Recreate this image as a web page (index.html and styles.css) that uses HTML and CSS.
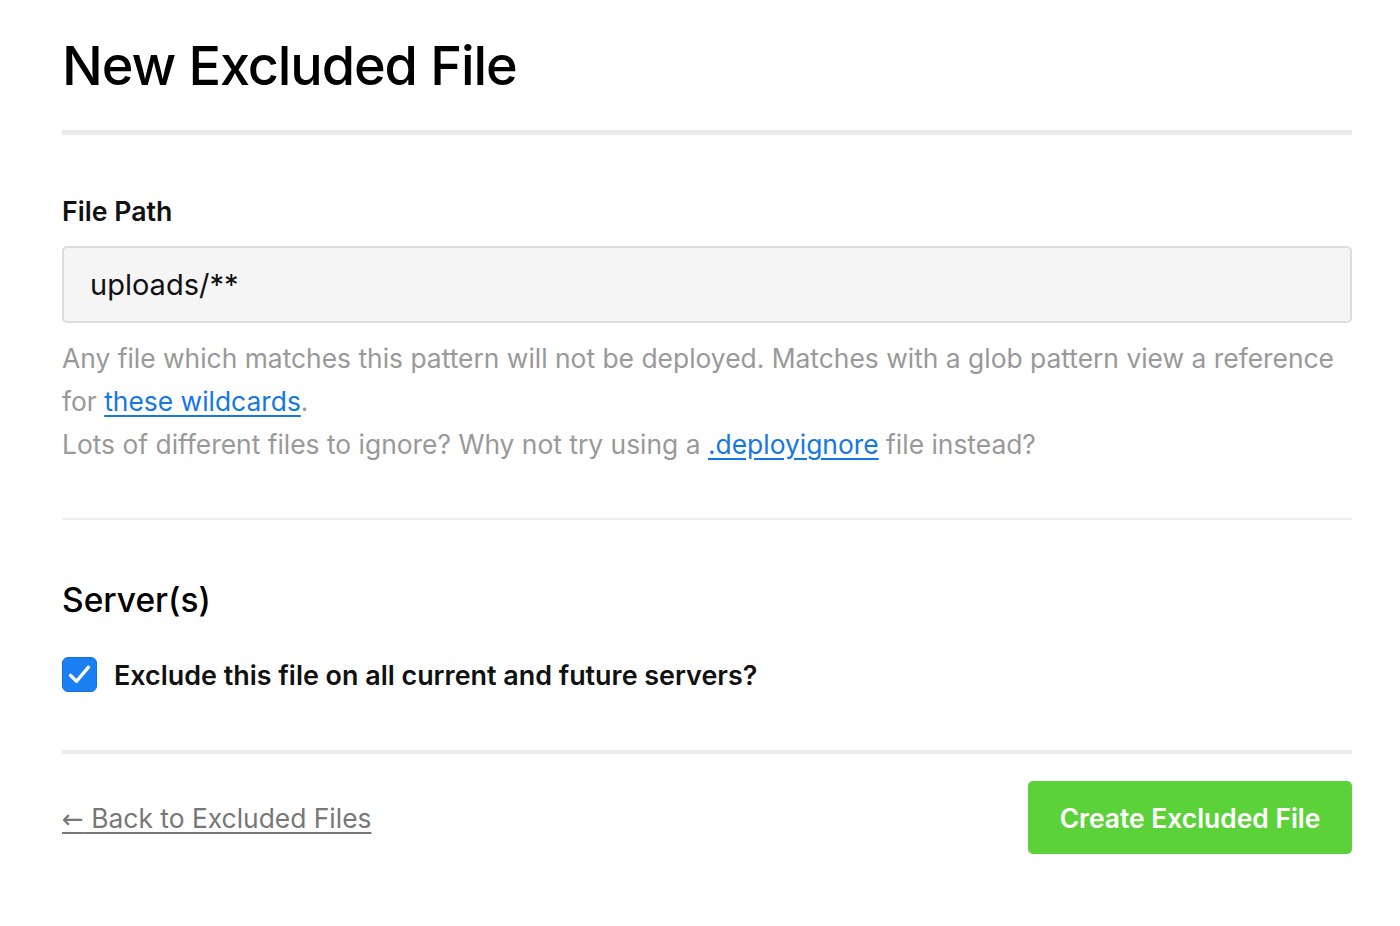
FILE: index.html
```html
<!DOCTYPE html>
<html lang="en">
<head>
<meta charset="utf-8">
<title>New Excluded File</title>
<link rel="stylesheet" href="styles.css">
</head>
<body>
<main class="page">
  <h1 class="title">New Excluded File</h1>
  <hr class="rule rule-thick">
  <section class="field">
    <label class="label" for="path">File Path</label>
    <input class="input" id="path" type="text" value="uploads/**">
    <p class="help">Any file which matches this pattern will not be deployed. Matches with a glob pattern view a reference for <a href="#">these wildcards</a>.</p>
    <p class="help">Lots of different files to ignore? Why not try using a <a href="#">.deployignore</a> file instead?</p>
  </section>
  <hr class="rule rule-thin">
  <section class="servers">
    <h2 class="subtitle">Server(s)</h2>
    <label class="check">
      <span class="box"><svg class="tick" viewBox="0 0 24 24" width="27" height="27"><path d="M4 12.8 L9.4 18 L20 5.5" fill="none" stroke="#fff" stroke-width="3" stroke-linecap="round" stroke-linejoin="round"/></svg></span>
      <span class="check-text">Exclude this file on all current and future servers?</span>
    </label>
  </section>
  <hr class="rule rule-mid">
  <footer class="actions">
    <a class="back" href="#"><span class="arrow">&larr;</span> Back to Excluded Files</a>
    <button class="btn" type="button">Create Excluded File</button>
  </footer>
</main>
</body>
</html>
```
FILE: styles.css
```css
html, body {
  margin: 0;
  padding: 0;
  background: #fff;
}
body {
  font-family: Inter, "Liberation Sans", Arial, sans-serif;
  color: #111;
}
.page {
  padding: 32px 48px 40px 62px;
}
.title {
  margin: 0;
  font-size: 54px;
  font-weight: 500;
  line-height: 68px;
  letter-spacing: -1.1px;
  color: #000;
}
.rule {
  border: 0;
  margin: 0;
  background: #ebebeb;
}
.rule-thick {
  height: 5px;
  margin-top: 30px;
}
.rule-thin {
  height: 2px;
  margin-top: 52px;
  background: #eeeeee;
}
.rule-mid {
  height: 4px;
  margin-top: 58px;
}
.field {
  display: flex;
  flex-direction: column;
  padding-top: 58px;
}
.label {
  font-size: 26.7px;
  font-weight: 600;
  line-height: 36px;
  color: #111;
}
.input {
  margin-top: 17px;
  height: 77px;
  box-sizing: border-box;
  border: 2px solid #dcdcdc;
  border-radius: 5px;
  background: #f5f5f5;
  padding: 0 26px;
  font-family: inherit;
  font-size: 29px;
  color: #111;
  outline: none;
}
.help {
  margin: 0;
  font-size: 26.4px;
  line-height: 43px;
  color: #999;
}
.help:first-of-type {
  margin-top: 14px;
}
.help a {
  color: #1577e6;
  text-decoration: underline;
  text-underline-offset: 4px;
}
.servers {
  padding-top: 58px;
}
.subtitle {
  margin: 0;
  font-size: 33.5px;
  font-weight: 500;
  line-height: 44px;
  color: #000;
}
.check {
  display: flex;
  align-items: center;
  gap: 17px;
  margin-top: 35px;
}
.box {
  width: 35px;
  height: 35px;
  box-sizing: border-box;
  border-radius: 6px;
  background: #1a7ff0;
  border: 1px solid #1570d8;
  display: flex;
  align-items: center;
  justify-content: center;
}
.tick {
  display: block;
}
.check-text {
  font-size: 26.9px;
  font-weight: 600;
  color: #111;
}
.actions {
  display: flex;
  justify-content: space-between;
  align-items: center;
  margin-top: 27px;
}
.back {
  font-size: 26.4px;
  color: #777;
  text-decoration: underline;
  text-underline-offset: 4px;
}
.arrow {
  font-family: "DejaVu Sans", sans-serif;
  font-size: 26px;
}
.btn {
  width: 324px;
  height: 73px;
  border: 0;
  border-radius: 5px;
  background: #5cd23a;
  color: #fff;
  font-family: inherit;
  font-size: 26.4px;
  font-weight: 600;
  cursor: pointer;
}
```
